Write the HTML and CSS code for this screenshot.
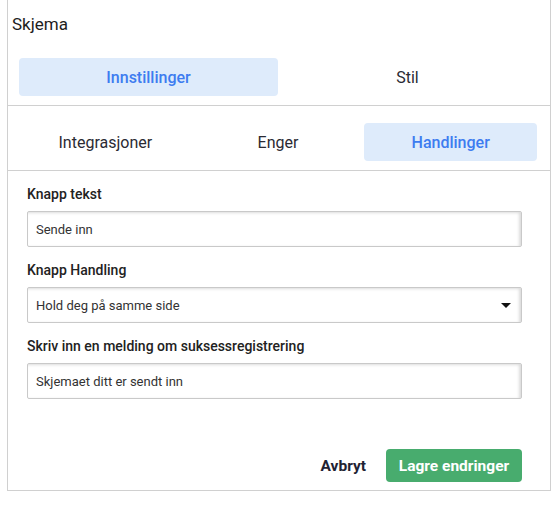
FILE: index.html
```html
<!DOCTYPE html>
<html lang="no">
<head>
<meta charset="utf-8">
<title>Skjema</title>
<link rel="stylesheet" href="styles.css">
</head>
<body>
<div class="panel">
  <div class="title">Skjema</div>
  <div class="tabs tabs-main">
    <div class="tab active">Innstillinger</div>
    <div class="tab">Stil</div>
  </div>
  <div class="tabs tabs-sub">
    <div class="tab">Integrasjoner</div>
    <div class="tab">Enger</div>
    <div class="tab active">Handlinger</div>
  </div>
  <div class="form">
    <div class="field">
      <div class="label">Knapp tekst</div>
      <div class="input">Sende inn</div>
    </div>
    <div class="field">
      <div class="label">Knapp Handling</div>
      <div class="input select">
        <span>Hold deg på samme side</span>
        <svg class="caret" width="10" height="5" viewBox="0 0 10 5"><path d="M0 0H10L5 5Z" fill="#111"/></svg>
      </div>
    </div>
    <div class="field">
      <div class="label">Skriv inn en melding om suksessregistrering</div>
      <div class="input">Skjemaet ditt er sendt inn</div>
    </div>
    <div class="actions">
      <button class="btn-cancel">Avbryt</button>
      <button class="btn-save">Lagre endringer</button>
    </div>
  </div>
</div>
</body>
</html>
```

FILE: styles.css
```css
* { box-sizing: border-box; }
html, body { margin: 0; padding: 0; background: #fff; }
body { font-family: Roboto, "Liberation Sans", Arial, sans-serif; color: #222; }

.panel {
  margin-left: 7px;
  width: 544px;
  border: 1px solid #d0d0d0;
  border-top: none;
}

.title {
  padding: 14px 4px 0;
  font-size: 17px;
  line-height: 20px;
  color: #1d1d1d;
}

.tabs {
  display: flex;
  padding-left: 11px;
  padding-right: 13px;
  border-bottom: 1px solid #d0d0d0;
}
.tabs-main { margin-top: 24px; padding-bottom: 9px; }
.tabs-sub { padding-top: 17px; padding-bottom: 9px; }

.tab {
  flex: 1;
  height: 38px;
  display: flex;
  align-items: center;
  justify-content: center;
  font-size: 16px;
  color: #2a2a33;
  border-radius: 4px;
}
.tab.active {
  background: #deebfb;
  color: #3d7cf0;
  font-weight: 500;
}

.form {
  padding: 14px 28px 8px 19px;
}
.field { margin-bottom: 14px; }
.label {
  font-size: 14px;
  font-weight: 500;
  line-height: 18px;
  color: #222;
  margin-bottom: 8px;
}
.input {
  height: 36px;
  border: 1px solid #c9c9c9;
  border-radius: 2px;
  box-shadow: inset -2px 1px 3px rgba(0,0,0,0.14);
  padding: 0 8px;
  display: flex;
  align-items: center;
  font-size: 13px;
  color: #333;
}
.select { justify-content: space-between; padding-right: 10px; }
.caret { display: block; }

.actions {
  margin-top: 50px;
  display: flex;
  justify-content: flex-end;
  align-items: center;
  gap: 20px;
}
.btn-cancel {
  border: none;
  background: none;
  padding: 0;
  font-family: inherit;
  font-size: 15.5px;
  font-weight: 700;
  color: #1f2333;
}
.btn-save {
  border: none;
  background: #48ac6e;
  color: #fff;
  font-family: inherit;
  font-size: 15.5px;
  font-weight: 700;
  height: 33px;
  padding: 0 10px;
  border-radius: 4px;
  width: 136px;
}
```
